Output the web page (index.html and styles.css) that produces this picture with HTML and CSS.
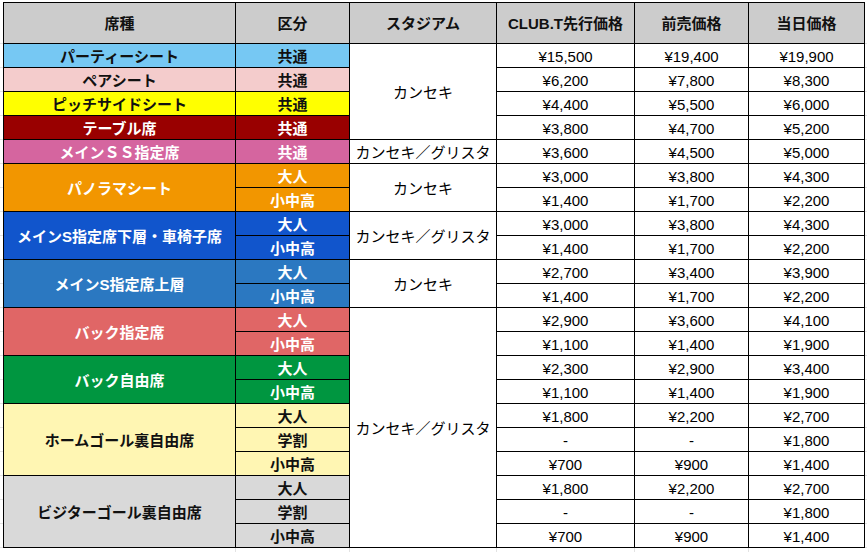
FILE: index.html
```html
<!DOCTYPE html>
<html lang="ja">
<head>
<meta charset="utf-8">
<title>料金表</title>
<link rel="stylesheet" href="styles.css">
</head>
<body>
<table class="price">
  <colgroup>
    <col class="w-seat"><col class="w-cat"><col class="w-std"><col class="w-club"><col class="w-pre"><col class="w-day">
  </colgroup>
  <thead>
    <tr class="head">
      <th>席種</th><th>区分</th><th>スタジアム</th><th>CLUB.T先行価格</th><th>前売価格</th><th>当日価格</th>
    </tr>
  </thead>
  <tbody>
    <tr>
      <td class="seat party">パーティーシート</td><td class="cat party">共通</td>
      <td class="std" rowspan="4">カンセキ</td>
      <td>¥15,500</td><td>¥19,400</td><td>¥19,900</td>
    </tr>
    <tr>
      <td class="seat pair">ペアシート</td><td class="cat pair">共通</td>
      <td>¥6,200</td><td>¥7,800</td><td>¥8,300</td>
    </tr>
    <tr>
      <td class="seat pitch">ピッチサイドシート</td><td class="cat pitch">共通</td>
      <td>¥4,400</td><td>¥5,500</td><td>¥6,000</td>
    </tr>
    <tr>
      <td class="seat tbl">テーブル席</td><td class="cat tbl">共通</td>
      <td>¥3,800</td><td>¥4,700</td><td>¥5,200</td>
    </tr>
    <tr>
      <td class="seat ss">メインＳＳ指定席</td><td class="cat ss">共通</td>
      <td class="std">カンセキ／グリスタ</td>
      <td>¥3,600</td><td>¥4,500</td><td>¥5,000</td>
    </tr>
    <tr>
      <td class="seat pano" rowspan="2">パノラマシート</td><td class="cat pano">大人</td>
      <td class="std" rowspan="2">カンセキ</td>
      <td>¥3,000</td><td>¥3,800</td><td>¥4,300</td>
    </tr>
    <tr>
      <td class="cat pano">小中高</td>
      <td>¥1,400</td><td>¥1,700</td><td>¥2,200</td>
    </tr>
    <tr>
      <td class="seat lower" rowspan="2">メインS指定席下層・車椅子席</td><td class="cat lower">大人</td>
      <td class="std" rowspan="2">カンセキ／グリスタ</td>
      <td>¥3,000</td><td>¥3,800</td><td>¥4,300</td>
    </tr>
    <tr>
      <td class="cat lower">小中高</td>
      <td>¥1,400</td><td>¥1,700</td><td>¥2,200</td>
    </tr>
    <tr>
      <td class="seat upper" rowspan="2">メインS指定席上層</td><td class="cat upper">大人</td>
      <td class="std" rowspan="2">カンセキ</td>
      <td>¥2,700</td><td>¥3,400</td><td>¥3,900</td>
    </tr>
    <tr>
      <td class="cat upper">小中高</td>
      <td>¥1,400</td><td>¥1,700</td><td>¥2,200</td>
    </tr>
    <tr>
      <td class="seat back" rowspan="2">バック指定席</td><td class="cat back">大人</td>
      <td class="std" rowspan="10">カンセキ／グリスタ</td>
      <td>¥2,900</td><td>¥3,600</td><td>¥4,100</td>
    </tr>
    <tr>
      <td class="cat back">小中高</td>
      <td>¥1,100</td><td>¥1,400</td><td>¥1,900</td>
    </tr>
    <tr>
      <td class="seat free" rowspan="2">バック自由席</td><td class="cat free">大人</td>
      <td>¥2,300</td><td>¥2,900</td><td>¥3,400</td>
    </tr>
    <tr>
      <td class="cat free">小中高</td>
      <td>¥1,100</td><td>¥1,400</td><td>¥1,900</td>
    </tr>
    <tr>
      <td class="seat home" rowspan="3">ホームゴール裏自由席</td><td class="cat home">大人</td>
      <td>¥1,800</td><td>¥2,200</td><td>¥2,700</td>
    </tr>
    <tr>
      <td class="cat home">学割</td>
      <td>-</td><td>-</td><td>¥1,800</td>
    </tr>
    <tr>
      <td class="cat home">小中高</td>
      <td>¥700</td><td>¥900</td><td>¥1,400</td>
    </tr>
    <tr>
      <td class="seat visitor" rowspan="3">ビジターゴール裏自由席</td><td class="cat visitor">大人</td>
      <td>¥1,800</td><td>¥2,200</td><td>¥2,700</td>
    </tr>
    <tr>
      <td class="cat visitor">学割</td>
      <td>-</td><td>-</td><td>¥1,800</td>
    </tr>
    <tr>
      <td class="cat visitor">小中高</td>
      <td>¥700</td><td>¥900</td><td>¥1,400</td>
    </tr>
  </tbody>
</table>
</body>
</html>
```

FILE: styles.css
```css
html {
  margin: 0;
  padding: 0;
  background-color: #ffffff;
  background-image:
    repeating-linear-gradient(to bottom, #e3e3e3 0, #e3e3e3 1px, transparent 1px, transparent 24px),
    linear-gradient(#e3e3e3, #e3e3e3),
    linear-gradient(#e3e3e3, #e3e3e3),
    linear-gradient(#e3e3e3, #e3e3e3),
    linear-gradient(#e3e3e3, #e3e3e3),
    linear-gradient(#e3e3e3, #e3e3e3);
  background-repeat: no-repeat;
  background-size:
    100% 505px,
    1px 10px,
    1px 10px,
    1px 10px,
    1px 10px,
    1px 10px;
  background-position:
    0 43px,
    235px 548px,
    349px 548px,
    496px 548px,
    634px 548px,
    748px 548px;
  min-height: 552px;
}

body {
  margin: 0;
  padding: 2px 0 0 3px;
  font-family: "Liberation Sans", "Noto Sans CJK JP", sans-serif;
  font-size: 15px;
  color: #000;
}

.price {
  border-collapse: collapse;
  table-layout: fixed;
  width: 861px;
  border: 1px solid #000;
  background: #fff;
}

.w-seat { width: 232px; }
.w-cat { width: 114px; }
.w-std { width: 147px; }
.w-club { width: 138px; }
.w-pre { width: 114px; }
.w-day { width: 116px; }

.price th,
.price td {
  border: 1px solid #000;
  padding: 0;
  text-align: center;
  vertical-align: middle;
  line-height: 17px;
  white-space: nowrap;
  overflow: hidden;
}

.price td {
  height: 24px;
  padding-top: 2px;
  box-sizing: border-box;
}

.head th {
  height: 40px;
  background: #cccccc;
  font-weight: 700;
  color: #111;
}

.seat,
.cat {
  font-weight: 700;
}

.std {
  font-weight: 400;
}

.party { background: #76c8f3; color: #111; }
.pair { background: #f4cccc; color: #111; }
.pitch { background: #ffff00; color: #111; }
.tbl { background: #990000; color: #fff; }
.ss { background: #d5659f; color: #fff; }
.pano { background: #f29600; color: #fff; }
.lower { background: #1155cc; color: #fff; }
.upper { background: #2b78c1; color: #fff; }
.back { background: #e06666; color: #fff; }
.free { background: #009640; color: #fff; }
.home { background: #fff6b3; color: #111; }
.visitor { background: #d9d9d9; color: #111; }
```
